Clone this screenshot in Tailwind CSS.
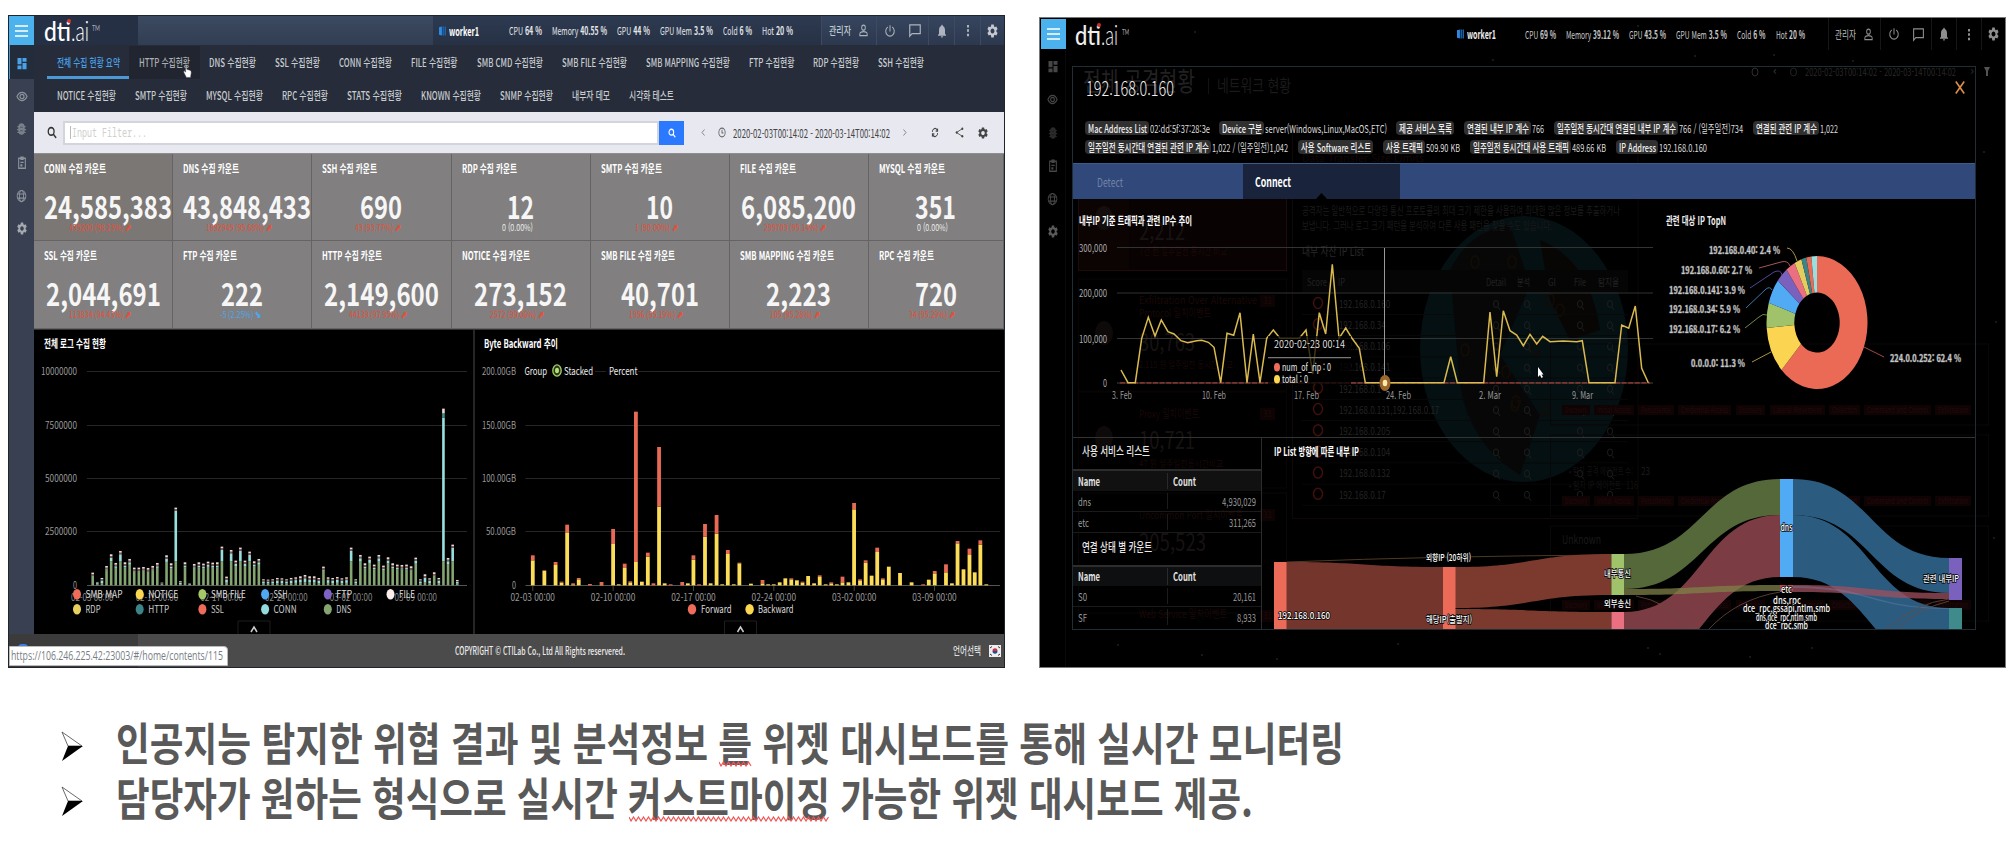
<!DOCTYPE html>
<html lang="ko">
<head>
<meta charset="utf-8">
<title>dti.ai widget dashboard</title>
<script src="https://cdn.jsdelivr.net/npm/@tailwindcss/browser@4"></script>
</head>
<body class="w-[2014px] h-[842px] overflow-hidden bg-white font-['Noto_Sans_CJK_KR','Noto_Sans',sans-serif] text-[12px]">
<svg class="hidden">
  <symbol id="gear" viewBox="0 0 24 24" preserveAspectRatio="none"><path fill="currentColor" d="M19.14 12.94c.04-.3.06-.61.06-.94 0-.32-.02-.64-.07-.94l2.03-1.58c.18-.14.23-.41.12-.61l-1.92-3.32c-.12-.22-.37-.29-.59-.22l-2.39.96c-.5-.38-1.03-.7-1.62-.94l-.36-2.54c-.04-.24-.24-.41-.48-.41h-3.84c-.24 0-.43.17-.47.41l-.36 2.54c-.59.24-1.13.57-1.62.94l-2.39-.96c-.22-.08-.47 0-.59.22L2.74 8.87c-.12.21-.08.47.12.61l2.03 1.58c-.05.3-.09.63-.09.94s.02.64.07.94l-2.03 1.58c-.18.14-.23.41-.12.61l1.92 3.32c.12.22.37.29.59.22l2.39-.96c.5.38 1.03.7 1.62.94l.36 2.54c.05.24.24.41.48.41h3.84c.24 0 .44-.17.47-.41l.36-2.54c.59-.24 1.13-.56 1.62-.94l2.39.96c.22.08.47 0 .59-.22l1.92-3.32c.12-.22.07-.47-.12-.61l-2.01-1.58zM12 15.6c-1.98 0-3.6-1.62-3.6-3.6s1.62-3.6 3.6-3.6 3.6 1.62 3.6 3.6-1.62 3.6-3.6 3.6z"/></symbol>
  <symbol id="dash" viewBox="0 0 24 24" preserveAspectRatio="none"><path fill="currentColor" d="M3 13h8V3H3v10zm0 8h8v-6H3v6zm10 0h8V11h-8v10zm0-18v6h8V3h-8z"/></symbol>
  <symbol id="eye" viewBox="0 0 24 24" preserveAspectRatio="none"><path fill="none" stroke="currentColor" stroke-width="2.4" d="M2 12C5 6 8 4.500 12 4.500S19 6 22 12C19 18 16 19.500 12 19.500S5 18 2 12z"/><circle cx="12" cy="12" r="4" fill="none" stroke="currentColor" stroke-width="2.400"/></symbol>
  <symbol id="bug" viewBox="0 0 24 24" preserveAspectRatio="none"><rect x="5" y="2" width="14" height="20" rx="7" fill="currentColor"/><path stroke="currentColor" stroke-width="2" d="M3 8h18M2 13h20M3 18h18"/><path stroke="#0006" stroke-width="1.500" d="M9 9h6M9 15h6"/></symbol>
  <symbol id="clip" viewBox="0 0 24 24" preserveAspectRatio="none"><path fill="none" stroke="currentColor" stroke-width="2.600" d="M4 4h16v17H4z"/><path fill="currentColor" d="M8 1h8v6H8zM8 10h8v2H8zM8 14h5v4H8z"/></symbol>
  <symbol id="globe" viewBox="0 0 24 24" preserveAspectRatio="none"><g fill="none" stroke="currentColor" stroke-width="2"><circle cx="12" cy="12" r="9.500"/><ellipse cx="12" cy="12" rx="4.500" ry="9.500"/><path d="M3 8.500h18M3 15.500h18"/></g></symbol>
  <symbol id="person" viewBox="0 0 24 24" preserveAspectRatio="none"><g fill="none" stroke="currentColor" stroke-width="2"><circle cx="12" cy="7.500" r="4"/><path d="M4 20v-2.500c0-2.500 5-3.800 8-3.800s8 1.300 8 3.800V20z"/></g></symbol>
  <symbol id="power" viewBox="0 0 24 24" preserveAspectRatio="none"><path fill="none" stroke="currentColor" stroke-width="2" d="M12 2v11M7.500 5a8.500 8.500 0 1 0 9 0"/></symbol>
  <symbol id="chat" viewBox="0 0 24 24" preserveAspectRatio="none"><path fill="none" stroke="currentColor" stroke-width="2" d="M3 21V3h18v14H7z"/></symbol>
  <symbol id="bell" viewBox="0 0 24 24" preserveAspectRatio="none"><path fill="currentColor" d="M12 22c1.100 0 2-.9 2-2h-4c0 1.100.9 2 2 2zm6-6v-5c0-3.070-1.640-5.640-4.500-6.320V4c0-.83-.67-1.500-1.500-1.500s-1.500.67-1.500 1.500v.68C7.630 5.360 6 7.920 6 11v5l-2 2v1h16v-1l-2-2z"/></symbol>
  <symbol id="dots" viewBox="0 0 24 24" preserveAspectRatio="none"><path fill="currentColor" d="M10 3h4v4h-4zM10 10h4v4h-4zM10 17h4v4h-4z"/></symbol>
  <symbol id="mag" viewBox="0 0 24 24" preserveAspectRatio="none"><g fill="none" stroke="currentColor" stroke-width="3.200"><circle cx="10" cy="10" r="7"/><path d="M15 15l7 7"/></g></symbol>
  <symbol id="clock" viewBox="0 0 24 24" preserveAspectRatio="none"><g fill="none" stroke="currentColor" stroke-width="2.600"><circle cx="12" cy="12" r="9.500"/><path d="M12 6v7h4"/></g></symbol>
  <symbol id="sync" viewBox="0 0 24 24" preserveAspectRatio="none"><path fill="none" stroke="currentColor" stroke-width="2.600" d="M4 11a8 8 0 0 1 14-5l2 3M20 3v6h-6M20 13a8 8 0 0 1-14 5l-2-3M4 21v-6h6"/></symbol>
  <symbol id="share" viewBox="0 0 24 24" preserveAspectRatio="none"><path fill="none" stroke="currentColor" stroke-width="2" d="M19 4L4 12l15 8"/><g fill="currentColor"><circle cx="19.500" cy="4" r="2.700"/><circle cx="4.500" cy="12" r="2.700"/><circle cx="19.500" cy="20" r="2.700"/></g></symbol>
  <symbol id="server" viewBox="0 0 24 24" preserveAspectRatio="none"><path fill="#2d8ae0" d="M0 3l10-2v22L0 21z"/><path fill="#1d62ab" d="M12 1h5v22h-5zM19 1h5v22h-5z"/></symbol>
  <symbol id="hand" viewBox="0 0 24 24" preserveAspectRatio="none"><path fill="#fff" stroke="#444" d="M7 1q2-1 3 1v7l10 2q2 1 2 4l-2 8H9L2 14q0-3 3-2l2 2z"/></symbol>
</svg>

<main class="flex h-[668px] pl-[8px] pt-[15px]">
  <!-- Collection summary dashboard -->
  <section class="flex h-[653px] w-[997px] flex-col border border-[#20242c] bg-black">
    <div class="flex h-[618px] w-[995px]">
      <aside class="flex w-[25px] shrink-0 flex-col bg-[#384052] text-[#8d929b]">
        <div class="flex h-[29px] flex-col items-center justify-center gap-[3px] bg-[#4cb2ee]">
          <i class="h-[2px] w-[13px] bg-[#d5ecf9]"></i><i class="h-[2px] w-[13px] bg-[#d5ecf9]"></i><i class="h-[2px] w-[13px] bg-[#d5ecf9]"></i>
        </div>
        <div class="flex h-[34px] items-center justify-center border-l border-[#4a9ad9] bg-[#232c3a] pt-[2px] text-[#4aa3ea]"><svg class="h-[15px] w-[12px]"><use href="#dash"/></svg></div>
        <div class="flex h-[33px] items-center justify-center pt-px"><svg class="h-[13px] w-[12px]"><use href="#eye"/></svg></div>
        <div class="flex h-[33px] items-center justify-center pt-px text-[#7a808b]"><svg class="h-[14px] w-[11px]"><use href="#bug"/></svg></div>
        <div class="flex h-[33px] items-center justify-center pt-[2px]"><svg class="h-[14px] w-[10px]"><use href="#clip"/></svg></div>
        <div class="flex h-[33px] items-center justify-center pt-[2px]"><svg class="h-[14px] w-[11px]"><use href="#globe"/></svg></div>
        <div class="flex h-[33px] items-center justify-center pt-[2px] text-[#a5a9b0]"><svg class="h-[15px] w-[12px]"><use href="#gear"/></svg></div>
      </aside>
      <div class="flex w-[970px] flex-col">
        <header class="flex h-[29px] text-[#e4e6ea]">
          <div class="relative flex w-[104px] items-center bg-[#263044] pl-[10px] font-['Lato'] text-[27px] leading-none text-white">
            <span data-w="27" class="font-medium">dti</span><span data-w="18" class="font-light">.ai</span><span data-w="8" class="ml-[3px] mb-[5px] text-[8px] text-[#aab]">TM</span>
            <i class="absolute left-[33px] top-[3px] h-[4px] w-[4px] rounded-full bg-[#e0322c]"></i>
          </div>
          <div class="w-[295px] bg-linear-to-b from-[#3c4a61] to-[#313d52]"></div>
          <div class="flex w-[388px] items-center bg-linear-to-b from-[#2e3a50] to-[#263145] pl-[6px] text-[11px]">
            <svg class="mr-[3px] h-[10px] w-[7px]"><use href="#server"/></svg><b data-w="30" class="text-[12px] text-white">worker1</b>
            <div class="ml-[30px] flex gap-[10px]">
              <span data-w="33">CPU <b>64 %</b></span><span data-w="55">Memory <b>40.55 %</b></span><span data-w="33">GPU <b>44 %</b></span><span data-w="53">GPU Mem <b>3.5 %</b></span><span data-w="29">Cold <b>6 %</b></span><span data-w="31">Hot <b>20 %</b></span>
            </div>
          </div>
          <div class="flex w-[183px] items-center bg-linear-to-b from-[#36455e] to-[#2c384e] text-[#aeb4bf]">
            <div class="flex h-full w-[55px] items-center gap-[7px] border-l border-[#3d4a60] pl-[7px]"><span data-w="22" class="text-[11px] text-[#dfe2e6]">관리자</span><svg class="h-[15px] w-[11px]"><use href="#person"/></svg></div>
            <div class="flex h-full w-[26px] items-center justify-center border-l border-[#3d4a60]"><svg class="h-[14px] w-[12px]"><use href="#power"/></svg></div>
            <div class="flex h-full w-[26px] items-center justify-center"><svg class="h-[15px] w-[14px]"><use href="#chat"/></svg></div>
            <div class="flex h-full w-[26px] items-center justify-center border-l border-[#3d4a60]"><svg class="h-[16px] w-[12px]"><use href="#bell"/></svg></div>
            <div class="flex h-full w-[26px] items-center justify-center border-l border-[#3d4a60]"><svg class="h-[15px] w-[12px]"><use href="#dots"/></svg></div>
            <div class="flex h-full w-[24px] items-center justify-center border-l border-[#3d4a60] text-[#c6cad0]"><svg class="h-[16px] w-[13px]"><use href="#gear"/></svg></div>
          </div>
        </header>
        <nav class="relative h-[67px] bg-[#262c39] text-[11.500px] font-medium text-[#c9ccd1]">
          <div id="tabs1" class="flex h-[34px] items-center gap-[19px] pl-[23px] pt-px"></div>
          <div id="tabs2" class="flex h-[33px] items-center gap-[19px] pl-[23px]"></div>
          <i class="absolute left-[13px] top-[31px] h-[3px] w-[82px] bg-[#4a98d6]"></i>
          <i class="absolute left-[95px] top-[1px] -z-0 h-[33px] w-[71px] bg-black/15"></i>
          <svg class="absolute left-[149px] top-[19px] h-[14px] w-[9px]"><use href="#hand"/></svg>
        </nav>
        <div class="flex h-[41px] items-center bg-[#e8e9f0] pl-[13px] text-[#444]">
          <svg class="h-[13px] w-[10px] text-[#333]"><use href="#mag"/></svg>
          <div class="ml-[6px] flex h-[24px] w-[596px] items-center border-2 border-[#d3d5dd] bg-white pl-[5px] font-['Noto_Sans_Mono','DejaVu_Sans_Mono',monospace] text-[12px] text-[#cfcfcf]"><i class="mr-px h-[13px] w-px bg-[#bbb]"></i><span data-w="75">Input Filter...</span></div>
          <div class="flex h-[24px] w-[25px] items-center justify-center bg-[#2b79ff] text-white"><svg class="h-[10px] w-[8px]"><use href="#mag"/></svg></div>
          <svg class="ml-[17px] h-[7px] w-[4px]" viewBox="0 0 4 7"><path d="M3.500.5L1 3.500l2.500 3" fill="none" stroke="#888"/></svg>
          <svg class="ml-[13px] h-[11px] w-[8px] text-[#666]"><use href="#clock"/></svg>
          <span data-w="157" class="ml-[7px] text-[12px] text-[#444]">2020-02-03T00:14:02 - 2020-03-14T00:14:02</span>
          <svg class="ml-[13px] h-[7px] w-[4px]" viewBox="0 0 4 7"><path d="M.5.5L3 3.500l-2.500 3" fill="none" stroke="#888"/></svg>
          <svg class="ml-[24px] h-[11px] w-[8px]"><use href="#sync"/></svg>
          <svg class="ml-[16px] h-[11px] w-[9px]"><use href="#share"/></svg>
          <svg class="ml-[13px] h-[14px] w-[12px]"><use href="#gear"/></svg>
        </div>
        <div id="cards" class="grid h-[176px] grid-cols-[139px_139px_139.500px_139px_139px_139px_135.500px] grid-rows-[87px_88px] border-t border-[#8f8e8e] bg-[#817f7f]"></div>
        <svg id="charts" class="h-[305px] w-[970px]" viewBox="34 329 970 305"></svg>
      </div>
    </div>
    <footer class="relative flex h-[33px] items-center bg-[#4b4b4b] text-[11px] font-medium text-[#ececec]">
      <i class="h-full w-[129px] bg-[#3b3b3b]"></i>
      <span data-w="170" class="ml-[317px]">COPYRIGHT © CTILab Co., Ltd All Rights reservered.</span>
      <span data-w="28" class="ml-[328px] text-[#ddd]">언어선택</span>
      <svg class="ml-[8px] h-[12px] w-[12px]" viewBox="0 0 12 12"><path fill="#eee" d="M0 0h12v12H0z"/><path fill="#d22f3a" d="M3.500 6a2.500 2.800 0 0 1 5 0z"/><path fill="#1b4f9e" d="M3.500 6a2.500 2.800 0 0 0 5 0z"/><path stroke="#333" d="M1 3l2-1.500M9 1.500L11 3M1 9l2 1.500M9 10.500L11 9"/></svg>
      <i class="absolute left-[9px] top-[10px] h-[4px] w-[10px] rounded-t bg-[#3b80e6]"></i>
      <div class="absolute left-0 top-[12px] flex h-[20px] w-[219px] items-center rounded-tr-sm border border-[#bbb] bg-white pl-px font-['Open_Sans'] text-[12px] text-[#777d84]"><span data-w="212">https://106.246.225.42:23003/#/home/contents/115</span></div>
    </footer>
  </section>

  <!-- Host detail dialog over the attack overview -->
  <section class="relative ml-[34px] mt-[2px] flex h-[651px] w-[967px] flex-col border border-[#777] bg-black">
    <svg id="ghost" class="absolute left-0 top-0 h-[649px] w-[965px] opacity-70" viewBox="1040 18 965 649"></svg>
    <header class="relative flex h-[32px] items-center pl-px text-[11px] text-[#c8c8c8]">
      <div class="flex h-[30px] w-[25px] flex-col items-center justify-center gap-[3px] bg-[#4cb2ee]">
        <i class="h-[2px] w-[13px] bg-[#d5ecf9]"></i><i class="h-[2px] w-[13px] bg-[#d5ecf9]"></i><i class="h-[2px] w-[13px] bg-[#d5ecf9]"></i>
      </div>
      <div class="relative ml-[9px] flex w-[382px] items-center font-['Lato'] text-[27px] leading-none text-[#eee]">
        <span data-w="26" class="font-medium">dti</span><span data-w="17" class="font-light">.ai</span><span data-w="7" class="mb-[5px] ml-[4px] text-[8px] text-[#aaa]">TM</span>
        <i class="absolute left-[22px] top-[2px] h-[4px] w-[4px] rounded-full bg-[#d02a26]"></i>
      </div>
      <svg class="mr-[3px] h-[10px] w-[7px]"><use href="#server"/></svg><b data-w="29" class="text-[12px] text-[#eee]">worker1</b>
      <div class="ml-[29px] flex w-[303px] gap-[10px]">
        <span data-w="31">CPU <b>69 %</b></span><span data-w="53">Memory <b>39.12 %</b></span><span data-w="37">GPU <b>43.5 %</b></span><span data-w="51">GPU Mem <b>3.5 %</b></span><span data-w="28.500">Cold <b>6 %</b></span><span data-w="29">Hot <b>20 %</b></span>
      </div>
      <div class="flex h-full items-center text-[#8e8e8e]">
        <div class="flex h-full w-[52px] items-center gap-[7px] border-l border-[#161616] pl-[6px]"><span data-w="21" class="text-[11px] text-[#bbb]">관리자</span><svg class="h-[15px] w-[11px]"><use href="#person"/></svg></div>
        <div class="flex h-full w-[26px] items-center justify-center border-l border-[#161616]"><svg class="h-[14px] w-[12px]"><use href="#power"/></svg></div>
        <div class="flex h-full w-[25px] items-center justify-center"><svg class="h-[15px] w-[13px]"><use href="#chat"/></svg></div>
        <div class="flex h-full w-[25px] items-center justify-center border-l border-[#161616]"><svg class="h-[16px] w-[12px]"><use href="#bell"/></svg></div>
        <div class="flex h-full w-[25px] items-center justify-center border-l border-[#161616]"><svg class="h-[15px] w-[12px]"><use href="#dots"/></svg></div>
        <div class="flex h-full w-[24px] items-center justify-center border-l border-[#161616]"><svg class="h-[16px] w-[13px]"><use href="#gear"/></svg></div>
      </div>
    </header>
    <div class="relative flex h-[617px]">
      <aside class="flex w-[26px] shrink-0 flex-col border-r border-[#0a0a0a] text-[#464646]">
        <div class="flex h-[33px] items-center justify-center"><svg class="h-[15px] w-[12px]"><use href="#dash"/></svg></div>
        <div class="flex h-[33px] items-center justify-center"><svg class="h-[13px] w-[11px]"><use href="#eye"/></svg></div>
        <div class="flex h-[33px] items-center justify-center text-[#2a2a2a]"><svg class="h-[14px] w-[10px]"><use href="#bug"/></svg></div>
        <div class="flex h-[33px] items-center justify-center"><svg class="h-[14px] w-[10px]"><use href="#clip"/></svg></div>
        <div class="flex h-[33px] items-center justify-center"><svg class="h-[14px] w-[11px]"><use href="#globe"/></svg></div>
        <div class="flex h-[33px] items-center justify-center text-[#5a5a5a]"><svg class="h-[15px] w-[12px]"><use href="#gear"/></svg></div>
      </aside>
      <article class="ml-[6px] mt-[16px] flex h-[564px] w-[904px] flex-col border border-[#1f2e35] text-[#ddd]">
        <div class="flex h-[44px] items-center justify-between pl-[13px] pr-[10px]">
          <span data-w="88" class="-mt-[3px] text-[20px] font-light text-[#eee]">192.168.0.160</span>
          <svg class="mb-[3px] h-[13px] w-[10px]" viewBox="0 0 10 13"><path d="M.8.500l8.400 12M9.200.500L.8 12.500" stroke="#dd9048" stroke-width="1.600"/></svg>
        </div>
        <div id="chips1" class="mt-[7px] flex h-[19.500px] items-center pl-[12px] text-[11px]"></div>
        <div id="chips2" class="flex h-[19.500px] items-center pl-[12px] text-[11px]"></div>
        <div class="mt-[6px] flex h-[36px] items-stretch border-t border-[#3c5c88] bg-[#30487a]">
          <div class="flex w-[170px] items-center pl-[24px] text-[12px] text-[#7383a6]"><span data-w="26">Detect</span></div>
          <div class="relative flex w-[157px] items-center bg-[#19233b] pl-[12px] text-[13px] font-bold text-white"><span data-w="36">Connect</span>
            <svg class="absolute bottom-0 left-[73px] h-[6px] w-[11px]" viewBox="0 0 11 6"><path d="M0 6L5.500 0 11 6z" fill="#000"/></svg>
          </div>
        </div>
        <svg id="traffic" class="h-[238px] w-[902px] shrink-0" viewBox="1073 199 902 238"></svg>
        <div class="flex h-[192px] border-t border-[#333]">
          <div class="w-[188.500px] shrink-0 border-r border-[#2c2c2c]">
            <div class="flex h-[31px] items-center pb-[5px] pl-[9px] text-[12px] font-medium text-[#e8e8e8]"><span data-w="68">사용 서비스 리스트</span></div>
            <div class="grid h-[22px] grid-cols-[94px_94px] items-center border-t-2 border-[#2d2d2d] bg-[#111] text-[11px] font-bold text-[#e2e2e2]"><div class="flex pl-[5px]"><span data-w="22">Name</span></div><div class="flex border-l border-[#2a2a2a] pl-[5px]"><span data-w="23">Count</span></div></div>
            <div class="grid h-[21px] grid-cols-[94px_94px] items-center border-b border-[#1a1a1a] text-[11px] text-[#999]"><div class="flex pl-[5px]"><span data-w="13">dns</span></div><div class="flex justify-end border-l border-[#1c1c1c] pr-[5px]"><span data-w="34">4,930,029</span></div></div>
            <div class="grid h-[21px] grid-cols-[94px_94px] items-center border-b border-[#1a1a1a] text-[11px] text-[#999]"><div class="flex pl-[5px]"><span data-w="11">etc</span></div><div class="flex justify-end border-l border-[#1c1c1c] pr-[5px]"><span data-w="27">311,265</span></div></div>
            <div class="flex h-[32px] items-center pb-[5px] pl-[9px] text-[12px] font-medium text-[#e8e8e8]"><span data-w="70">연결 상태 별 카운트</span></div>
            <div class="grid h-[21px] grid-cols-[94px_94px] items-center border-t-2 border-[#2d2d2d] bg-[#0e0f10] text-[11px] font-bold text-[#e2e2e2]"><div class="flex pl-[5px]"><span data-w="22">Name</span></div><div class="flex border-l border-[#2a2a2a] pl-[5px]"><span data-w="23">Count</span></div></div>
            <div class="grid h-[21px] grid-cols-[94px_94px] items-center border-b border-[#1a1a1a] text-[11px] text-[#999]"><div class="flex pl-[5px]"><span data-w="9">S0</span></div><div class="flex justify-end border-l border-[#1c1c1c] pr-[5px]"><span data-w="23">20,161</span></div></div>
            <div class="grid h-[20px] grid-cols-[94px_94px] items-center text-[11px] text-[#999]"><div class="flex pl-[5px]"><span data-w="9">SF</span></div><div class="flex justify-end border-l border-[#1c1c1c] pr-[5px]"><span data-w="19">8,933</span></div></div>
          </div>
          <svg id="sankey" class="h-[191px] w-[713px] shrink-0" viewBox="1262 438 713 191"></svg>
        </div>
      </article>
    </div>
  </section>
</main>

<ul class="mt-[46px] flex flex-col pl-[61px] text-[45px] font-bold text-[#595959]">
  <li class="flex h-[55px] items-center gap-[33px]">
    <svg class="mt-[8px] h-[30px] w-[22px]" viewBox="0 0 22 30"><path d="M1 1l20 14H7z" fill="#fff" stroke="#444" stroke-width=".8"/><path d="M7 15h15L1 30z" fill="#000"/></svg>
    <div class="relative flex"><span data-w="1228" class="leading-[55px]">인공지능 탐지한 위협 결과 및 분석정보 를 위젯 대시보드를 통해 실시간 모니터링</span>
      <svg class="absolute left-[603px] top-[47px] h-[6px] w-[34px]" viewBox="0 0 34 6"><path id="w1" fill="none" stroke="#f25555" stroke-width="1.200"/></svg></div>
  </li>
  <li class="flex h-[55px] items-center gap-[33px]">
    <svg class="mt-[8px] h-[30px] w-[22px]" viewBox="0 0 22 30"><path d="M1 1l20 14H7z" fill="#fff" stroke="#444" stroke-width=".8"/><path d="M7 15h15L1 30z" fill="#000"/></svg>
    <div class="relative flex"><span data-w="1137" class="leading-[55px]">담당자가 원하는 형식으로 실시간 커스트마이징 가능한 위젯 대시보드 제공.</span>
      <svg class="absolute left-[513px] top-[47px] h-[6px] w-[200px]" viewBox="0 0 200 6"><path id="w2" fill="none" stroke="#f25555" stroke-width="1.200"/></svg></div>
  </li>
</ul>

<script>
const $ = id => document.getElementById(id);
const label = (w, s, cls = '') => `<span data-w="${w}" class="${cls}">${s}</span>`;

// Tabs
const K = ' 수집현황';
$('tabs1').innerHTML = [[63,'전체 수집 현황 요약'],[51,'HTTP'+K],[47,'DNS'+K],[45,'SSL'+K],[53,'CONN'+K],[46.5,'FILE'+K],[66,'SMB CMD'+K],[65,'SMB FILE'+K],[84,'SMB MAPPING'+K],[45.5,'FTP'+K],[46,'RDP'+K],[46,'SSH'+K]].map((t,i)=>label(t[0],t[1],i?'':'text-[#4aa0e6]')).join('');
$('tabs2').innerHTML = [[59,'NOTICE'+K],[52,'SMTP'+K],[57,'MYSQL'+K],[46,'RPC'+K],[55,'STATS'+K],[60,'KNOWN'+K],[53,'SNMP'+K],[38,'내부자 데모'],[45,'시각화 테스트']].map(t=>label(t[0],t[1])).join('');

// Counter cards: title, title width, value, value width, change, change width, direction
const C = [
 ['CONN',62,'24,585,383',128,'435200 (98.23%)',62,1],['DNS',56,'43,848,433',128,'1892945 (95.68%)',66,1],['SSH',55,'690',42,'43 (93.77%)',46,1],['RDP',55,'12',27,'0 (0.00%)',31,0],['SMTP',61,'10',27,'1 (90.00%)',43,1],['FILE',56,'6,085,200',115,'295703 (95.14%)',62,1],['MYSQL',66,'351',41,'0 (0.00%)',31,0],
 ['SSL',53,'2,044,691',115,'113834 (94.43%)',62,1],['FTP',54,'222',42,'-5 (2.25%)',41,2],['HTTP',60,'2,149,600',115,'44139 (97.95%)',58,1],['NOTICE',68,'273,152',93,'2572 (99.06%)',54,1],['SMB FILE',74,'40,701',78,'1956 (95.19%)',54,1],['SMB MAPPING',94,'2,223',65,'105 (95.28%)',50,1],['RPC',55,'720',42,'34 (95.29%)',46,1]];
$('cards').innerHTML = C.map((c,i)=>`<div class="${i==0?'flex flex-col items-center border-b border-r border-[#656363] bg-[#7b7774]':'flex flex-col items-center border-b border-r border-[#656363]'}">
 <div class="flex w-full pl-[10px] pt-[5px] text-[11.500px] font-bold leading-[18px] text-white">${label(c[1],c[0]+' 수집 카운트')}</div>
 <div class="${c[3]>120?'mt-[7px] flex h-[42px] w-full items-center pl-[10px] text-[31px] font-bold leading-none text-[#f6f6f6]':'mt-[7px] flex h-[42px] items-center text-[31px] font-bold leading-none text-[#f6f6f6]'}">${label(c[3],c[2])}</div>
 <div class="${['-mt-[6px] mr-[7px] flex text-[9.500px] leading-[14px] text-[#ececec]','-mt-[6px] mr-[7px] flex text-[9.500px] leading-[14px] text-[#e0523c]','-mt-[6px] mr-[3px] flex text-[9.500px] leading-[14px] text-[#4ea6ea]'][c[6]]}">${label(c[5],c[4]+(c[6]==1?' <b>⬈</b>':c[6]==2?' <b>⬊</b>':''))}</div></div>`).join('');

// SVG helpers
const T = (x,y,w,s,fill='#999',size=11,extra='') => `<text x="${x}" y="${y+size*.36}" font-size="${size}" fill="${fill}" ${w?`textLength="${w}" lengthAdjust="spacingAndGlyphs"`:''} ${extra}>${s}</text>`;
const R = (x,y,w,h,f,e='') => `<rect x="${x}" y="${y}" width="${w}" height="${h}" fill="${f}" ${e}/>`;
const E = (x,y,rx,ry,f,e='') => `<ellipse cx="${x}" cy="${y}" rx="${rx}" ry="${ry}" fill="${f}" ${e}/>`;
const L = (x1,y1,x2,y2,c,w=1) => `<path d="M${x1} ${y1}L${x2} ${y2}" stroke="${c}" stroke-width="${w}" fill="none"/>`;

// Log and byte charts
let o = R(34,329,970,305,'#000') + L(34,329.500,1004,329.500,'#333') + L(474,329,474,634,'#333',1.500);
o += T(44,344,62,'전체 로그 수집 현황','#fff',11.500,'font-weight="700"') + T(484,344,74,'Byte Backward 추이','#fff',11.500,'font-weight="700"');
[371.500,425.500,478.500,531.500,585.500].forEach((y,i)=>{
  o += L(87,y,467,y,i==4?'#555':'#262626') + L(i?525.500:638,y,1000,y,i==4?'#555':'#262626');
  const w=[36,32,32,32,4][i]; o += T(77-w,y,w,['10000000','7500000','5000000','2500000','0'][i],'#999',10);
  const v=[34,34,34,30,4][i]; o += T(516-v,y,v,['200.00GB','150.00GB','100.00GB','50.00GB','0'][i],'#999',10);
});
const tops=[758,786,774,738,703,729,693,727,717,743,743,741,744,738,729,788,706,730,563,783,727,790,732,727,731,725,728,727,680,770,690,722,683,722,695,724,717,778,779,778,774,775,778,774,772,769,765,769,769,774,740,772,774,771,775,772,683,778,705,730,710,734,705,737,712,730,734,735,734,739,713,778,763,775,757,774,266,714,674,780];
tops.forEach((t,i)=>{
  const x=91.400+i*4.615, h=(796-t)/3, g=h<12?h*.3:Math.min(h*.78,24), tip=Math.min(h*.35,h>100?9:3.300);
  o += R(x,585.300-g,2.600,g,'#84a472') + R(x,585.300-h+tip,2.600,Math.max(h-g-tip,0),'#9adfe0') + R(x,585.300-h,2.600,tip*.55,'#e9dcd8') + R(x,585.300-h+tip*.55,2.600,tip*.45,h>100?'#3f8f8d':'#8b5a52');
});
const D=['02-03 00:00','02-10 00:00','02-17 00:00','02-24 00:00','03-02 00:00','03-09 00:00'];
D.forEach((d,i)=>{ o += T(71+i*64.700,597,42.500,d,'#888',10) + T(510.500+i*80.350,597,44.500,d,'#999',10)+L(532.800+i*80.350,585,532.800+i*80.350,591,'#444'); });
[['#ee6c59','SMB MAP',37],['#fbd850','NOTICE',30],['#a6c968','SMB FILE',35],['#4fa9f2','SSH',14],['#7c63c4','FTP',16],['#fdeeee','FILE',16]].forEach((l,i)=>{const x=77+i*62.700;o+=E(x,594.300,4,5.200,l[0])+T(x+8.500,594.300,l[2],l[1],'#ddd',10.500)});
[['#e8d060','RDP',15],['#3d8488','HTTP',21],['#ee6c59','SSL',13],['#93dadd','CONN',23],['#84a472','DNS',15]].forEach((l,i)=>{const x=77+i*62.700;o+=E(x,609.300,4,5.200,l[0])+T(x+8.500,609.500,l[2],l[1],'#ccc',10.500)});
const B=[[179,721,706],[212,753,751],[244,735,726],[261,788,785],[277,637,614],[294,793,790],[310,778,774],[342,796,792],[375,795,786],[408,672,627],[424,793],[441,744,731],[457,787,784],[473,726,275],[490,785],[507,710,698],[523,796,790],[539,560,381],[555,790],[572,796,793],[605,796,786],[621,790],[637,719,706],[653,796,793],[670,650,612],[686,790],[703,641,585],[719,793],[735,702,690],[752,793],[768,730,728],[801,791],[834,790,780],[850,793],[866,793],[883,787],[899,775],[916,778,775],[932,781],[948,788,785],[964,768],[981,790],[997,771,766],[1014,793],[1030,790,787],[1046,793],[1062,787,770],[1079,787],[1095,568,549],[1112,781,778],[1128,728,721],[1145,767],[1161,696,683],[1177,778,775],[1194,740],[1226,759],[1259,787],[1292,796,793],[1308,779],[1325,760,753],[1357,757,733],[1374,790],[1390,670,663],[1407,748],[1424,705,686],[1439,757],[1455,674,661],[1472,793]];
B.forEach(([x,b,t=b])=>{const X=470+x/2.851-1.900;o+=R(X,320+b/3,3.800,(796-b)/3,'#fbdd58')+R(X,320+t/3,3.800,(b-t)/3,'#e86a55')});
o += T(524.500,371,22.500,'Group','#eee',11)+E(557,370.500,4.200,5.600,'#26351a','stroke="#a6cf6a" stroke-width="1.300"')+E(557,370.500,2,2.800,'#b4dc78')+T(564,371,29,'Stacked','#eee',11)+L(595,371.500,606,371.500,'#222')+T(609,371,28.500,'Percent','#eee',11);
o += E(692,609.300,4.200,5.200,'#ee6c59')+T(701,609.500,30.500,'Forward','#ddd',10.500)+E(749.600,609.300,4.200,5.200,'#fbd850')+T(758,609.500,35.500,'Backward','#ddd',10.500);
[254,740.500].forEach(x=>o+=`<path d="M${x-16} 634V621h32V634" fill="none" stroke="#1d1d1d"/><path d="M${x-3} 632l3-5 3 5" fill="none" stroke="#ccc" stroke-width="1.500"/>`);
$('charts').innerHTML=o;

// Dimmed overview behind the dialog
o='';
o+=E(1524,349,104,133,'#08171c')+`<path d="M1450 270q20-40 60-45l20 60-30 70 40 60-20 60q-50-30-60-90z" fill="#0a0b0b"/><path d="M1540 240q50 20 60 90l-30 10-20-40z" fill="#0b0907"/>`;
[[1465,350],[1475,262],[1506,372],[1516,402],[1550,300],[1560,310],[1535,350],[1515,405],[1545,410],[1512,262]].forEach(p=>o+=E(p[0],p[1],4,6,'none','stroke="#1c1207" stroke-width="1.500"'));
o+=T(1083,82,112,'전체 공격현황','#303030',26)+T(1217,86,74,'네트워크 현황','#262626',17)+L(1208.500,78,1208.500,94,'#1a1a1a');
o+=T(1805,72,151,'2020-02-03T00:14:02 - 2020-03-14T00:14:02','#3a3a3a',11)+E(1755,72,3,4,'none','stroke="#444"')+E(1793.500,72,3,4,'none','stroke="#333"')+T(1773,71,4,'‹','#555',12)+T(1970,71,4,'›','#444',12)+`<path d="M1984 67h6l-2 4v5h-2v-5z" fill="#777"/>`;
o+=R(1078.500,196,208,74.500,'#0c0303','stroke="#2e1010"')+R(1079,196,50,74,'#120505')+E(1104,218,9,12,'#1d1515')+E(1104,333,9,12,'#140f0f')+E(1104,438,9,12,'#140f0f');
o+=R(1078.500,279,208,112,'none','stroke="#0e0808"')+R(1078.500,392,208,96,'none','stroke="#0e0808"')+R(1078.500,493,208,120,'none','stroke="#0c0c0c"')+`<path d="M1292.500 130V518.500H1638V130" fill="none" stroke="#190a0a"/>`;
[[1139,231,46,'2,212',24],[1139,342,56,'30,763',24],[1139,440,56,'10,721',24],[1139,542,67,'205,523',24]].forEach(a=>o+=T(a[0],a[1],a[2],a[3],'#221b1b',a[4]));
[[1139,251,88,'7건 뭔 일주일전 동시간 비교',10],[1139,300,118,'Exfiltration Over Alternative',11],[1139,313,72,'Protocol 일치이벤트',11],[1139,365,94,'2,115 뭔 일주일전 동시간 비교',9],[1139,414,60,'Proxy 일치이벤트',11],[1139,464,84,'47 뭔 일주일전동시간비교',9],[1139,515,104,'Uncommon Port 일치이벤트',11],[1139,614,88,'Web Service 일치이벤트',11]].forEach(a=>o+=T(a[0],a[1],a[2],a[3],'#260d0c',a[4]));
[301,414,515,616].forEach(y=>o+=R(1260,y-6,15,12,'#140505')+T(1263,y,9,'31','#2b0d0d',9));
o+=T(1302,158,122,'Data Transfer Size Limits','#1c0d0d',11)+T(1302,211,318,'공격자는 일반적으로 다양한 통신 프로토콜의 최대 크기 제한을 사용하여 최대한 많은 정보를 추출하거나','#262626',11)+T(1302,226,250,'보냅니다. 그러나 로그 크기 패턴을 분석하여 다른 사용 패턴을 찾을 수도 있습니다.','#242424',11);
o+=T(1302,252,62,'내부 자산 IP List','#3c3c3c',12)+R(1302,270,326,22,'#080808');
[[1307,20,'Score'],[1338,7,'IP'],[1486,20,'Detail'],[1517,13,'분석'],[1548,8,'GI'],[1574,12,'File'],[1598,21,'탐지율']].forEach(a=>o+=T(a[0],282,a[1],a[2],'#303030',10));
['160','34','106','141','1','131,192.168.0.17','205','104','132','17'].forEach((s,i)=>{const y=304+i*21.200;o+=E(1318,y-1,4.500,5.500,'none','stroke="#5a1712" stroke-width="1.500"')+T(1338,y,0,'192.168.0.'+s,'#343434',10.500,'transform="translate(314 0) scale(.766 1)"')+L(1302,y+10.500,1628,y+10.500,'#0c0c0c');[1496,1527,1580,1610].forEach(x=>o+=`<g stroke="#2c2c2c" fill="none"><ellipse cx="${x}" cy="${y}" rx="2.500" ry="3.500"/><path d="M${x+2} ${y+3}l2 3"/></g>`)});
[410,501,605].forEach(y=>{[[1562,28,'Discovery'],[1594,40,'Initial Access'],[1638,36,'Persistence'],[1678,53,'Credential Access'],[1736,29,'Discovery'],[1770,55,'Lateral Movement'],[1829,31,'Collection'],[1864,67,'Command and Control'],[1935,36,'Exfiltration']].forEach(a=>o+=R(a[0],y-5,a[1],10,'#160506')+T(a[0]+3,y,a[1]-6,a[2],'#331014',8));});
o+=R(1550.500,344,438,81,'none','stroke="#0c0c0c"')+R(1550.500,435,438,81,'none','stroke="#0c0c0c"')+R(1550.500,526,438,95,'none','stroke="#0c0c0c"')+T(1562,540,39,'Unknown','#242424',12)+T(1641,471,9,'23','#282828',11)+T(1569,471,64,'• 탐지 공격 에이전트 수:','#1b1b1b',10)+T(1641,561,9,'23','#222',11)+T(1626,485,12,'116','#1b1b1b',10)+T(1569,485,52,'• 탐지 IP 에이전트','#1b1b1b',10);
[[1195,32],[1493,60],[1695,56],[1853,61],[1774,55],[1118,645],[1202,655],[1277,659],[1398,644],[1660,654],[1812,648],[1994,538],[1984,152],[1996,322],[1648,648],[1750,657],[1638,26]].forEach(p=>o+=E(p[0],p[1],.8,1,'#3a3a3a'));
$('ghost').innerHTML=o;

// Key/value chips: gap before, chip width, chip, text width, text
const chips=a=>a.map(c=>`<div class="flex items-center" style="margin-left:${c[0]}px"><div class="flex h-[14px] items-center rounded-sm bg-[#303030] pl-[3px] font-medium text-[#f0f0f0]" style="width:${c[1]}px">${label(c[1]-5,c[2])}</div>${c[3]?label(c[3]-1,c[4],'ml-px text-[#dedede]'):''}</div>`).join('');
$('chips1').innerHTML=chips([[0,64,'Mac Address List',61,'02:dd:5f:37:28:3e'],[9,45,'Device 구분',123,'server(Windows,Linux,MacOS,ETC)'],[9,58,'제공 서비스 목록'],[10,67,'연결된 내부 IP 계수',13,'766'],[10,124,'일주일전 동시간대 연결된 내부 IP 계수',65,'766 / (일주일전)734'],[10,66,'연결된 관련 IP 계수',19,'1,022']]);
$('chips2').innerHTML=chips([[0,126,'일주일전 동시간대 연결된 관련 IP 계수',77,'1,022 / (일주일전)1,042'],[10,75,'사용 Software 리스트'],[10,42,'사용 트래픽',35,'509.90 KB'],[10,101,'일주일전 동시간대 사용 트래픽',35,'489.66 KB'],[10,42,'IP Address',49,'192.168.0.160']]);

// Traffic line and donut
o=T(1079,221,113,'내부IP 기준 트래픽과 관련 IP수 추이','#fff',11.500,'font-weight="700"')+T(1666,221,60,'관련 대상 IP TopN','#eee',11.500,'font-weight="700"');
[247.500,293,338.500,383].forEach((y,i)=>{const w=[28,28,28,4][i];o+=L(1117,y,1653,y,i==3?'#444':'#333')+T(1107-w,y+.5,w,['300,000','200,000','100,000','0'][i],'#aaa',10)});
[[1112,20,'3. Feb'],[1202,24,'10. Feb'],[1294,25,'17. Feb'],[1386,25,'24. Feb'],[1479,22,'2. Mar'],[1572,21,'9. Mar']].forEach(a=>o+=T(a[0],395,a[1],a[2],'#999',10));
o+=`<path d="M1120 382.800H1650" stroke="#a03a30" stroke-width="1.300" stroke-dasharray="5 1.600"/>`;
const P=[273,510,294,548,316,548,335,415,355,352,375,408,394,360,414,395,432,402,453,422,473,428,500,422,515,421,535,427,552,442,572,548,591,400,611,406,630,338,651,548,670,402,690,548,710,415,730,390,750,415,808,415,828,390,848,522,868,338,887,402,907,193,927,415,947,384,966,415,988,445,1006,548,1242,548,1262,470,1282,548,1361,548,1380,336,1400,530,1420,332,1440,392,1460,405,1480,437,1500,403,1520,432,1538,409,1560,425,1600,423,1640,425,1657,422,1677,548,1755,548,1775,375,1796,385,1816,318,1835,505,1855,548];
let d='';for(let i=0;i<P.length;i+=2)d+=(i?'L':'M')+(1030+P[i]/3).toFixed(1)+' '+(200+P[i+1]/3).toFixed(1);
o+=`<path d="${d}" fill="none" stroke="#d9ba4e" stroke-width="1.500"/>`;
o+=L(1384.500,248,1384.500,383,'#999')+E(1385,383,5.500,8,'#9a672f')+E(1385,383,2.300,3.200,'#ffe9a8');
o+=R(1268,336,83,48,'#000','opacity=".72"')+T(1274,344,71,'2020-02-23 00:14','#ddd',11)+L(1268,357.700,1351,357.700,'#777',1.300)+E(1277,367.300,3,4.300,'#ee6c59')+T(1282,367.300,49,'num_of_rip : 0','#eee',10.500)+E(1277,379.300,3,4.300,'#fbd850')+T(1282,379.300,26,'total : 0','#eee',10.500);
o+=`<path d="M1538 367v10l2-2 1.500 3 1.500-1-1.500-2.500h2z" fill="#fff"/>`;
const cum=[0,62.400,73.700,79.800,85.900,89.700,92.700,95,96.600,98.200,100],col=['#ea6a56','#fbd552','#a0c26a','#50abf4','#7a61bd','#ea6f80','#e3cd5e','#3d8488','#ea6a56','#9adfe0'];
const pt=(p,rx,ry)=>{const a=p/50*Math.PI;return (1817+rx*Math.sin(a)).toFixed(2)+' '+(322.600-ry*Math.cos(a)).toFixed(2)};
col.forEach((c,i)=>{const a=cum[i],b=cum[i+1],f=b-a>50?1:0;o+=`<path fill="${c}" d="M${pt(a,50.500,66.500)}A50.500 66.500 0 ${f} 1 ${pt(b,50.500,66.500)}L${pt(b,22.700,30)}A22.700 30 0 ${f} 0 ${pt(a,22.700,30)}z"/>`});
const O='font-weight="700" stroke="#888" stroke-width=".5"';
[[1709,250,71,'192.168.0.40: 2.4 %'],[1681,270,71,'192.168.0.60: 2.7 %'],[1669,290,76,'192.168.0.141: 3.9 %'],[1669,309.500,71,'192.168.0.34: 5.9 %'],[1669,329.500,71,'192.168.0.17: 6.2 %'],[1691,363.500,54,'0.0.0.0: 11.3 %'],[1890,358.500,71,'224.0.0.252: 62.4 %']].forEach(a=>o+=T(a[0],a[1],a[2],a[3],'#e6e6e6',10.500,O));
[['M1787 248q6 0 10 13','#a8964a'],['M1759 268l22-6q7-2 9 4','#a35560'],['M1750 288l24-16q7-3 8 3','#54459a'],['M1746 308l20-19q4-3 6 1','#3a78ac'],['M1745 328l14-11q4-4 8-2','#71884c'],['M1752 362l19-10','#ab9440'],['M1864 347l20 10','#a34a3e']].forEach(a=>o+=`<path d="${a[0]}" fill="none" stroke="${a[1]}"/>`);
$('traffic').innerHTML=o;

// Sankey
const F=(x1,a,b,x2,c,e,f,op=1)=>{const m=(x1+x2)/2;return `<path opacity="${op}" fill="${f}" d="M${x1} ${a}C${m} ${a} ${m} ${c} ${x2} ${c}V${e}C${m} ${e} ${m} ${b} ${x1} ${b}z"/>`};
o=T(1274,452,85,'IP List 방향에 따른 내부 IP','#fff',11.500,'font-weight="700"');
o+=`<path d="M1287 562q150-6 324-7" fill="none" stroke="#4d3a22"/>`;
o+=F(1286,562,629,1443,567,634,'#74362c')+F(1455,567,608,1611,554,595,'#7c3a2f')+F(1455,609,680,1611,612,683,'#7c3a2f');
o+=F(1624,554,589,1780,479,515,'#55683a')+F(1624,612,674,1780,515,577,'#7b3c44')+F(1624,589,595,1780,585,591,'#7f8048',.75);
o+=F(1793,479,515,1949,558,593,'#2b5c80')+F(1793,515,577,1949,608,670,'#2b5c80')+F(1793,585,592,1949,593,599,'#a0505f',.75)+F(1793,586,588,1949,608,609,'#7f86b8',.35);
o+=`<path d="M1636 596q30 5 58 33M1709 629q28-30 71-37M1886 629q30-26 63-30M1897 629q20-20 52-28" fill="none" stroke="#6b4a40" stroke-width=".8"/>`;
o+=R(1274,562,12.500,67,'#ec6a58')+R(1443,567,12.500,62,'#ec6a58')+R(1611.300,554,12.700,41,'#a0c26a')+R(1611.300,612,12.700,17,'#ea6f80')+R(1780,479,13,98,'#50abf4')+R(1780,585,13,7,'#b94a50')+R(1949,558,13,42,'#7a61bd')+R(1949,608,13,21,'#3f8a8a');
[[1278,616,52,'192.168.0.160'],[1426,558,45,'외향IP (20하위)'],[1426,620,46,'해당IP(출발지)'],[1604,574,27,'내부통신'],[1604,603.500,27,'외부송신'],[1780.500,528,12,'dns'],[1781,590,11,'etc'],[1773,601,28,'dns,rpc'],[1743,609,87,'dce_rpc,gssapi,ntlm,smb'],[1756,618,61,'dns,dce_rpc,ntlm,smb'],[1765,626,43,'dce_rpc,smb'],[1923,579,36,'관련 내부IP']].forEach(a=>o+=T(a[0],a[1],a[2],a[3],'#fff',9.500,'font-weight="500" stroke="#000" stroke-width="1.600" paint-order="stroke"'));
$('sankey').innerHTML=o;

// Spelling squiggles
[['w1',34],['w2',200]].forEach(([id,w])=>{let p='M0 1';for(let x=2,k=0;x<=w;x+=2.500,k++)p+=`L${x} ${k%2?1:5}`;$(id).setAttribute('d',p)});

// Condense every label to its column width
document.fonts.ready.then(fit);fit();
function fit(){document.querySelectorAll('[data-w]').forEach(e=>{
  e.classList.add('inline-block','origin-left','whitespace-nowrap','shrink-0');
  e.style.transform='';e.style.marginRight='';
  const n=e.getBoundingClientRect().width,w=+e.dataset.w;
  e.style.transform=`scaleX(${w/n})`;e.style.marginRight=(w-n)+'px';
})}
</script>
</body>
</html>
